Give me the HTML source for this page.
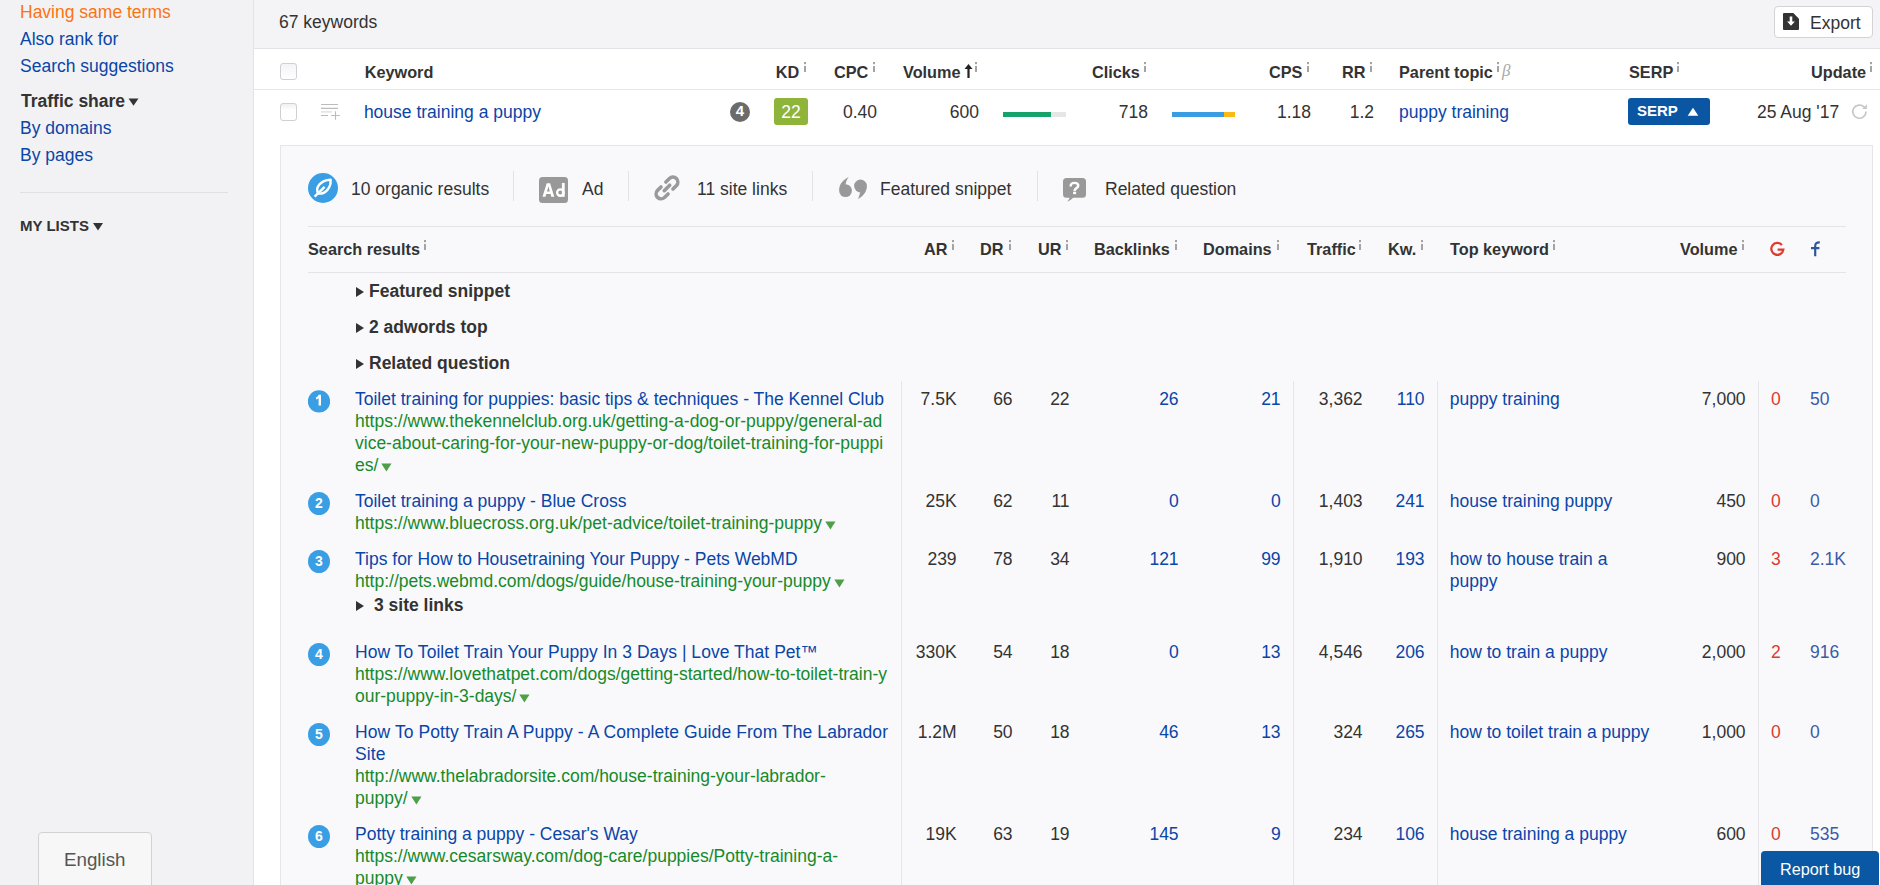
<!DOCTYPE html>
<html><head><meta charset="utf-8"><style>
html,body{margin:0;padding:0;}
body{width:1880px;height:885px;overflow:hidden;position:relative;background:#fff;font-family:"Liberation Sans",sans-serif;}
.t{position:absolute;white-space:nowrap;line-height:22px;font-family:"Liberation Sans",sans-serif;}
</style></head><body>
<div style="position:absolute;left:0px;top:0px;width:253px;height:885px;background:#f2f2f4;"></div>
<div style="position:absolute;left:253px;top:0px;width:1px;height:885px;background:#e2e2e7;"></div>
<div style="position:absolute;left:254px;top:0px;width:1626px;height:48px;background:#f4f4f6;"></div>
<div style="position:absolute;left:254px;top:48px;width:1626px;height:1px;background:#e2e2e7;"></div>
<div style="position:absolute;left:254px;top:49px;width:1626px;height:836px;background:#ffffff;"></div>
<div class="t" style="left:20px;top:1px;font-size:17.5px;color:#fb7314;">Having same terms</div>
<div class="t" style="left:20px;top:28px;font-size:17.5px;color:#0a45a8;">Also rank for</div>
<div class="t" style="left:20px;top:55px;font-size:17.5px;color:#0a45a8;">Search suggestions</div>
<div class="t" style="left:21px;top:90px;font-size:17.5px;font-weight:bold;color:#333333;">Traffic share</div>
<svg style="position:absolute;left:128px;top:98px" width="11" height="8"><path d="M0.5 0.5H10.5L5.5 7.8Z" fill="#333"/></svg>
<div class="t" style="left:20px;top:117px;font-size:17.5px;color:#0a45a8;">By domains</div>
<div class="t" style="left:20px;top:144px;font-size:17.5px;color:#0a45a8;">By pages</div>
<div style="position:absolute;left:20px;top:192px;width:208px;height:1px;background:#e0e0e5;"></div>
<div class="t" style="left:20px;top:215px;font-size:15px;font-weight:bold;color:#333333;">MY LISTS</div>
<svg style="position:absolute;left:93px;top:223px" width="11" height="8"><path d="M0 0H10L5 7.6Z" fill="#333"/></svg>
<div style="position:absolute;left:38px;top:832px;width:112px;height:60px;border:1px solid #d2d2d2;border-radius:4px;background:#f7f7f7;"></div>
<div class="t" style="left:64px;top:849px;font-size:18.75px;color:#555555;">English</div>
<div class="t" style="left:279px;top:11px;font-size:17.5px;color:#333333;">67 keywords</div>
<div style="position:absolute;left:1774px;top:6px;width:97px;height:30px;border:1px solid #d3d3d6;border-radius:4px;background:#fff;"></div>
<svg style="position:absolute;left:1783px;top:13px" width="16" height="17" viewBox="0 0 16 17"><path d="M1 0H10.3L16 5.7V16A1 1 0 0 1 15 17H1A1 1 0 0 1 0 16V1A1 1 0 0 1 1 0Z" fill="#333"/><path d="M6.7 3.6H9.3V8.6H11.9L8 12.8L4.1 8.6H6.7Z" fill="#fff"/></svg>
<div class="t" style="left:1810px;top:12px;font-size:17.5px;color:#333333;">Export</div>
<div style="position:absolute;left:254px;top:89px;width:1626px;height:1px;background:#e3e7ec;"></div>
<div style="position:absolute;left:280px;top:63px;width:15px;height:15px;border:1px solid #cfcfd4;border-radius:3px;background:linear-gradient(#f4f4f6,#fff);"></div>
<div class="t" style="left:364.7px;top:61px;font-size:16.25px;font-weight:bold;color:#333333;">Keyword</div>
<div class="t" style="left:775.8px;top:61px;font-size:16.25px;font-weight:bold;color:#333333;">KD</div>
<svg style="position:absolute;left:804px;top:62px" width="2" height="10"><rect x="0" y="0" width="2" height="2.2" fill="#a4a4a4"/><rect x="0" y="4" width="2" height="6" fill="#a4a4a4"/></svg>
<div class="t" style="left:834px;top:61px;font-size:16.25px;font-weight:bold;color:#333333;">CPC</div>
<svg style="position:absolute;left:873px;top:62px" width="2" height="10"><rect x="0" y="0" width="2" height="2.2" fill="#a4a4a4"/><rect x="0" y="4" width="2" height="6" fill="#a4a4a4"/></svg>
<div class="t" style="left:903px;top:61px;font-size:16.25px;font-weight:bold;color:#333333;">Volume</div>
<svg style="position:absolute;left:975px;top:62px" width="2" height="10"><rect x="0" y="0" width="2" height="2.2" fill="#a4a4a4"/><rect x="0" y="4" width="2" height="6" fill="#a4a4a4"/></svg>
<svg style="position:absolute;left:964px;top:64px" width="9" height="14"><path d="M4.5 0L8.5 5H5.6V14H3.4V5H0.5Z" fill="#222"/></svg>
<div class="t" style="left:1092px;top:61px;font-size:16.25px;font-weight:bold;color:#333333;">Clicks</div>
<svg style="position:absolute;left:1144px;top:62px" width="2" height="10"><rect x="0" y="0" width="2" height="2.2" fill="#a4a4a4"/><rect x="0" y="4" width="2" height="6" fill="#a4a4a4"/></svg>
<div class="t" style="left:1269px;top:61px;font-size:16.25px;font-weight:bold;color:#333333;">CPS</div>
<svg style="position:absolute;left:1307px;top:62px" width="2" height="10"><rect x="0" y="0" width="2" height="2.2" fill="#a4a4a4"/><rect x="0" y="4" width="2" height="6" fill="#a4a4a4"/></svg>
<div class="t" style="left:1342px;top:61px;font-size:16.25px;font-weight:bold;color:#333333;">RR</div>
<svg style="position:absolute;left:1370px;top:62px" width="2" height="10"><rect x="0" y="0" width="2" height="2.2" fill="#a4a4a4"/><rect x="0" y="4" width="2" height="6" fill="#a4a4a4"/></svg>
<div class="t" style="left:1399px;top:61px;font-size:16.25px;font-weight:bold;color:#333333;">Parent topic</div>
<svg style="position:absolute;left:1497px;top:62px" width="2" height="10"><rect x="0" y="0" width="2" height="2.2" fill="#a4a4a4"/><rect x="0" y="4" width="2" height="6" fill="#a4a4a4"/></svg>
<div class="t" style="left:1502px;top:60px;font-size:17px;font-style:italic;color:#a8a8a8;font-family:'Liberation Serif',serif;">&beta;</div>
<div class="t" style="left:1629px;top:61px;font-size:16.25px;font-weight:bold;color:#333333;">SERP</div>
<svg style="position:absolute;left:1677px;top:62px" width="2" height="10"><rect x="0" y="0" width="2" height="2.2" fill="#a4a4a4"/><rect x="0" y="4" width="2" height="6" fill="#a4a4a4"/></svg>
<div class="t" style="left:1811px;top:61px;font-size:16.25px;font-weight:bold;color:#333333;">Update</div>
<svg style="position:absolute;left:1870px;top:62px" width="2" height="10"><rect x="0" y="0" width="2" height="2.2" fill="#a4a4a4"/><rect x="0" y="4" width="2" height="6" fill="#a4a4a4"/></svg>
<div style="position:absolute;left:280px;top:103px;width:15px;height:16px;border:1px solid #cfcfd4;border-radius:3px;background:linear-gradient(#f0f0f3,#fff 40%);"></div>
<svg style="position:absolute;left:320px;top:103px" width="21" height="18"><g stroke="#bcbcbc" stroke-width="1.1"><path d="M1 1.5H18M1 5.4H18M1 12.5H8M11 12.5H19.8M15.5 8.3V16.8"/><path d="M1 8.9H11.8" stroke="#d6d6d6"/></g></svg>
<div class="t" style="left:363.9px;top:101px;font-size:17.5px;color:#0a45a8;">house training a puppy</div>
<div style="position:absolute;left:730px;top:102px;width:20px;height:20px;border-radius:50%;background:#6b6b6b;color:#fff;font:bold 15px/18px 'Liberation Sans';text-align:center;">4</div>
<div style="position:absolute;left:774px;top:98px;width:34px;height:27px;border-radius:3px;background:#8fb43a;color:#fff;font:17.5px/29px 'Liberation Sans';text-align:center;">22</div>
<div class="t" style="right:1003px;top:101px;font-size:17.5px;color:#333333;">0.40</div>
<div class="t" style="right:901px;top:101px;font-size:17.5px;color:#333333;">600</div>
<div style="position:absolute;left:1003px;top:112px;width:63px;height:5px;background:#e6e6e6;"></div>
<div style="position:absolute;left:1003px;top:112px;width:48px;height:5px;background:#16a26a;"></div>
<div class="t" style="right:732px;top:101px;font-size:17.5px;color:#333333;">718</div>
<div style="position:absolute;left:1172px;top:112px;width:52px;height:5px;background:#3b9de1;"></div>
<div style="position:absolute;left:1224px;top:112px;width:11px;height:5px;background:#fbb917;"></div>
<div class="t" style="right:569px;top:101px;font-size:17.5px;color:#333333;">1.18</div>
<div class="t" style="right:506px;top:101px;font-size:17.5px;color:#333333;">1.2</div>
<div class="t" style="left:1399px;top:101px;font-size:17.5px;color:#0a45a8;">puppy training</div>
<div style="position:absolute;left:1628px;top:98px;width:82px;height:27px;border-radius:3px;background:#0b56a3;"></div>
<div class="t" style="left:1637px;top:100px;font-size:15px;font-weight:bold;color:#fff;">SERP</div>
<svg style="position:absolute;left:1687px;top:107px" width="12" height="10"><path d="M6 0.8L11.3 8.8H0.7Z" fill="#fff"/></svg>
<div class="t" style="left:1757px;top:101px;font-size:17.5px;color:#333333;">25 Aug '17</div>
<svg style="position:absolute;left:1851px;top:104px" width="17" height="16" viewBox="0 0 17 16"><path d="M13.3 3.2A6.6 6.6 0 1 0 15 7.6" fill="none" stroke="#c6c6c6" stroke-width="1.7"/><path d="M15.9 0.3V4.9H11.2Z" fill="#c6c6c6"/></svg>
<div style="position:absolute;left:280px;top:145px;width:1591px;height:800px;border:1px solid #e6e6ea;background:#f9f9fb;"></div>
<svg style="position:absolute;left:308px;top:173px" width="30" height="30" viewBox="0 0 30 30"><circle cx="15" cy="15" r="15" fill="#3a9ee4"/><path d="M10.4 20.6C6.8 15.5 12 6.9 22.6 6.7C23.3 14.6 17.6 21.3 10.4 20.6Z" fill="none" stroke="#fff" stroke-width="2.4" stroke-linejoin="round"/><path d="M6.6 23.6L16.6 13.8" fill="none" stroke="#fff" stroke-width="2.4"/></svg>
<div class="t" style="left:351px;top:178px;font-size:17.5px;color:#333333;">10 organic results</div>
<div style="position:absolute;left:513px;top:171px;width:1px;height:30px;background:#e2e2e6;"></div>
<svg style="position:absolute;left:539px;top:177px" width="29" height="26" viewBox="0 0 29 26"><rect x="0" y="0" width="29" height="26" rx="3.5" fill="#999"/><path fill-rule="evenodd" d="M3.5 19.8L7.7 6.2H11.1L15.3 19.8H12.3L11.5 17H7.3L6.5 19.8ZM8 14.5H10.8L9.4 9.6Z" fill="#fff"/><rect x="22.9" y="6" width="2.8" height="13.8" fill="#fff"/><circle cx="21.3" cy="15.55" r="3.2" fill="none" stroke="#fff" stroke-width="2.3"/></svg>
<div class="t" style="left:582px;top:178px;font-size:17.5px;color:#333333;">Ad</div>
<div style="position:absolute;left:628px;top:171px;width:1px;height:30px;background:#e2e2e6;"></div>
<svg style="position:absolute;left:653px;top:174px" width="28" height="28" viewBox="1.1 1.1 25.85 25.85"><g fill="none" stroke="#9a9a9a" stroke-width="3.3" stroke-linecap="round"><path d="M11.5 16.5L16.5 11.5"/><path d="M13 8.5L16.3 5.2A4.6 4.6 0 0 1 22.8 11.7L19.5 15"/><path d="M15 19.5L11.7 22.8A4.6 4.6 0 0 1 5.2 16.3L8.5 13"/></g></svg>
<div class="t" style="left:697px;top:178px;font-size:17.5px;color:#333333;">11 site links</div>
<div style="position:absolute;left:812px;top:171px;width:1px;height:30px;background:#e2e2e6;"></div>
<svg style="position:absolute;left:838px;top:176px" width="30" height="25" viewBox="0 0 30 25"><g fill="#999"><circle cx="7.5" cy="14.6" r="6.4"/><path d="M10.8 1C5.5 3.5 1.6 7.5 1.2 13.5L7.6 8.4C8 5.5 9.2 3 10.8 1Z"/><circle cx="22.5" cy="10" r="6.4"/><path d="M19.6 23.2C25 20.5 28.4 16.5 28.8 10.5L22 16.4C21.5 19 20.8 21.5 19.6 23.2Z"/></g></svg>
<div class="t" style="left:880px;top:178px;font-size:17.5px;color:#333333;">Featured snippet</div>
<div style="position:absolute;left:1037px;top:171px;width:1px;height:30px;background:#e2e2e6;"></div>
<svg style="position:absolute;left:1062px;top:177px" width="26" height="26" viewBox="0 0 26 26"><path d="M4.5 1H20.5A3.5 3.5 0 0 1 24 4.5V17.3A3.5 3.5 0 0 1 20.5 20.8H11C9.5 22.5 7.5 24 5 24.6C6.3 23.5 7.3 22 7.6 20.8H4.5A3.5 3.5 0 0 1 1 17.3V4.5A3.5 3.5 0 0 1 4.5 1Z" fill="#999"/><path d="M8.6 9.4C8.6 6.7 10.5 5.9 12.5 5.9C14.8 5.9 16.3 7 16.3 8.7C16.3 11 12.6 11.2 12.6 13.9" fill="none" stroke="#fff" stroke-width="2.4"/><rect x="11.1" y="14.7" width="3" height="2.5" fill="#fff"/></svg>
<div class="t" style="left:1105px;top:178px;font-size:17.5px;color:#333333;">Related question</div>
<div style="position:absolute;left:308px;top:226px;width:1538px;height:1px;background:#e4e4e8;"></div>
<div class="t" style="left:308px;top:238px;font-size:16.25px;font-weight:bold;color:#333333;">Search results</div>
<svg style="position:absolute;left:424px;top:240px" width="2" height="10"><rect x="0" y="0" width="2" height="2.2" fill="#a4a4a4"/><rect x="0" y="4" width="2" height="6" fill="#a4a4a4"/></svg>
<div class="t" style="left:924px;top:238px;font-size:16.25px;font-weight:bold;color:#333333;">AR</div>
<svg style="position:absolute;left:952px;top:240px" width="2" height="10"><rect x="0" y="0" width="2" height="2.2" fill="#a4a4a4"/><rect x="0" y="4" width="2" height="6" fill="#a4a4a4"/></svg>
<div class="t" style="left:980px;top:238px;font-size:16.25px;font-weight:bold;color:#333333;">DR</div>
<svg style="position:absolute;left:1009px;top:240px" width="2" height="10"><rect x="0" y="0" width="2" height="2.2" fill="#a4a4a4"/><rect x="0" y="4" width="2" height="6" fill="#a4a4a4"/></svg>
<div class="t" style="left:1038px;top:238px;font-size:16.25px;font-weight:bold;color:#333333;">UR</div>
<svg style="position:absolute;left:1066px;top:240px" width="2" height="10"><rect x="0" y="0" width="2" height="2.2" fill="#a4a4a4"/><rect x="0" y="4" width="2" height="6" fill="#a4a4a4"/></svg>
<div class="t" style="left:1094px;top:238px;font-size:16.25px;font-weight:bold;color:#333333;">Backlinks</div>
<svg style="position:absolute;left:1175px;top:240px" width="2" height="10"><rect x="0" y="0" width="2" height="2.2" fill="#a4a4a4"/><rect x="0" y="4" width="2" height="6" fill="#a4a4a4"/></svg>
<div class="t" style="left:1203px;top:238px;font-size:16.25px;font-weight:bold;color:#333333;">Domains</div>
<svg style="position:absolute;left:1277px;top:240px" width="2" height="10"><rect x="0" y="0" width="2" height="2.2" fill="#a4a4a4"/><rect x="0" y="4" width="2" height="6" fill="#a4a4a4"/></svg>
<div class="t" style="left:1307px;top:238px;font-size:16.25px;font-weight:bold;color:#333333;">Traffic</div>
<svg style="position:absolute;left:1359px;top:240px" width="2" height="10"><rect x="0" y="0" width="2" height="2.2" fill="#a4a4a4"/><rect x="0" y="4" width="2" height="6" fill="#a4a4a4"/></svg>
<div class="t" style="left:1388px;top:238px;font-size:16.25px;font-weight:bold;color:#333333;">Kw.</div>
<svg style="position:absolute;left:1421px;top:240px" width="2" height="10"><rect x="0" y="0" width="2" height="2.2" fill="#a4a4a4"/><rect x="0" y="4" width="2" height="6" fill="#a4a4a4"/></svg>
<div class="t" style="left:1450px;top:238px;font-size:16.25px;font-weight:bold;color:#333333;">Top keyword</div>
<svg style="position:absolute;left:1553px;top:240px" width="2" height="10"><rect x="0" y="0" width="2" height="2.2" fill="#a4a4a4"/><rect x="0" y="4" width="2" height="6" fill="#a4a4a4"/></svg>
<div class="t" style="left:1680px;top:238px;font-size:16.25px;font-weight:bold;color:#333333;">Volume</div>
<svg style="position:absolute;left:1742px;top:240px" width="2" height="10"><rect x="0" y="0" width="2" height="2.2" fill="#a4a4a4"/><rect x="0" y="4" width="2" height="6" fill="#a4a4a4"/></svg>
<svg style="position:absolute;left:1769px;top:241px" width="17" height="17" viewBox="0 0 17 17"><path d="M12.9 3.9A6 6 0 1 0 14.3 8.6H8.6" fill="none" stroke="#dd3b2f" stroke-width="2.3"/></svg>
<svg style="position:absolute;left:1810px;top:240px" width="12" height="17" viewBox="0 0 12 17"><path d="M5.2 16.2V6.2C5.2 3.2 6.8 2.2 9.8 2.3M1 8.2H9.4" fill="none" stroke="#2f559a" stroke-width="2.2"/></svg>
<div style="position:absolute;left:308px;top:272px;width:1538px;height:1px;background:#e4e4e8;"></div>
<svg style="position:absolute;left:356px;top:287px" width="8" height="10"><path d="M0 0L8 5.0L0 10Z" fill="#333"/></svg>
<div class="t" style="left:369px;top:280px;font-size:17.5px;font-weight:bold;color:#333333;">Featured snippet</div>
<svg style="position:absolute;left:356px;top:323px" width="8" height="10"><path d="M0 0L8 5.0L0 10Z" fill="#333"/></svg>
<div class="t" style="left:369px;top:316px;font-size:17.5px;font-weight:bold;color:#333333;">2 adwords top</div>
<svg style="position:absolute;left:356px;top:359px" width="8" height="10"><path d="M0 0L8 5.0L0 10Z" fill="#333"/></svg>
<div class="t" style="left:369px;top:352px;font-size:17.5px;font-weight:bold;color:#333333;">Related question</div>
<div style="position:absolute;left:901px;top:381px;width:1px;height:504px;background:#e6e6ea;"></div>
<div style="position:absolute;left:1293px;top:381px;width:1px;height:504px;background:#e6e6ea;"></div>
<div style="position:absolute;left:1437px;top:381px;width:1px;height:504px;background:#e6e6ea;"></div>
<div style="position:absolute;left:1758px;top:381px;width:1px;height:504px;background:#e6e6ea;"></div>
<svg style="position:absolute;left:308px;top:390px" width="22" height="23" viewBox="0 0 22 23"><circle cx="11" cy="11.4" r="11.2" fill="#3a9ee4"/><path d="M10.6 4.8H13V15.6H10.6V8.2C9.8 8.9 8.9 9.3 8 9.6V7.4C9 7 10 6.2 10.6 4.8Z" fill="#fff"/></svg>
<div class="t" style="left:355px;top:388px;font-size:17.5px;color:#0a45a8;">Toilet training for puppies: basic tips &amp; techniques - The Kennel Club</div>
<div class="t" style="left:355px;top:410px;font-size:17.5px;color:#158a2a;">https://www.thekennelclub.org.uk/getting-a-dog-or-puppy/general-ad</div>
<div class="t" style="left:355px;top:432px;font-size:17.5px;color:#158a2a;">vice-about-caring-for-your-new-puppy-or-dog/toilet-training-for-puppi</div>
<div class="t" style="left:355px;top:454px;font-size:17.5px;color:#158a2a;">es/<span style="display:inline-block;width:3px"></span><svg width="11" height="9" style="vertical-align:-1px"><path d="M0.3 0.5H10.5L5.4 8.5Z" fill="#4f9e48"/></svg></div>
<div class="t" style="right:923.4px;top:388px;font-size:17.5px;color:#333333;">7.5K</div>
<div class="t" style="right:867.4px;top:388px;font-size:17.5px;color:#333333;">66</div>
<div class="t" style="right:810.4000000000001px;top:388px;font-size:17.5px;color:#333333;">22</div>
<div class="t" style="right:701.4000000000001px;top:388px;font-size:17.5px;color:#0a45a8;">26</div>
<div class="t" style="right:599.4000000000001px;top:388px;font-size:17.5px;color:#0a45a8;">21</div>
<div class="t" style="right:517.4000000000001px;top:388px;font-size:17.5px;color:#333333;">3,362</div>
<div class="t" style="right:455.4000000000001px;top:388px;font-size:17.5px;color:#0a45a8;">110</div>
<div class="t" style="left:1449.8px;top:388px;font-size:17.5px;color:#0a45a8;">puppy training</div>
<div class="t" style="right:134.4000000000001px;top:388px;font-size:17.5px;color:#333333;">7,000</div>
<div class="t" style="left:1771px;top:388px;font-size:17.5px;color:#dc3b2f;">0</div>
<div class="t" style="left:1810px;top:388px;font-size:17.5px;color:#3b5ba8;">50</div>
<div style="position:absolute;left:308px;top:492px;width:22px;height:23px;border-radius:50%;background:#3a9ee4;color:#fff;font:bold 14px/22px 'Liberation Sans';text-align:center;">2</div>
<div class="t" style="left:355px;top:490px;font-size:17.5px;color:#0a45a8;">Toilet training a puppy - Blue Cross</div>
<div class="t" style="left:355px;top:512px;font-size:17.5px;color:#158a2a;">https://www.bluecross.org.uk/pet-advice/toilet-training-puppy<span style="display:inline-block;width:3px"></span><svg width="11" height="9" style="vertical-align:-1px"><path d="M0.3 0.5H10.5L5.4 8.5Z" fill="#4f9e48"/></svg></div>
<div class="t" style="right:923.4px;top:490px;font-size:17.5px;color:#333333;">25K</div>
<div class="t" style="right:867.4px;top:490px;font-size:17.5px;color:#333333;">62</div>
<div class="t" style="right:810.4000000000001px;top:490px;font-size:17.5px;color:#333333;">11</div>
<div class="t" style="right:701.4000000000001px;top:490px;font-size:17.5px;color:#0a45a8;">0</div>
<div class="t" style="right:599.4000000000001px;top:490px;font-size:17.5px;color:#0a45a8;">0</div>
<div class="t" style="right:517.4000000000001px;top:490px;font-size:17.5px;color:#333333;">1,403</div>
<div class="t" style="right:455.4000000000001px;top:490px;font-size:17.5px;color:#0a45a8;">241</div>
<div class="t" style="left:1449.8px;top:490px;font-size:17.5px;color:#0a45a8;">house training puppy</div>
<div class="t" style="right:134.4000000000001px;top:490px;font-size:17.5px;color:#333333;">450</div>
<div class="t" style="left:1771px;top:490px;font-size:17.5px;color:#dc3b2f;">0</div>
<div class="t" style="left:1810px;top:490px;font-size:17.5px;color:#3b5ba8;">0</div>
<div style="position:absolute;left:308px;top:550px;width:22px;height:23px;border-radius:50%;background:#3a9ee4;color:#fff;font:bold 14px/22px 'Liberation Sans';text-align:center;">3</div>
<div class="t" style="left:355px;top:548px;font-size:17.5px;color:#0a45a8;">Tips for How to Housetraining Your Puppy - Pets WebMD</div>
<div class="t" style="left:355px;top:570px;font-size:17.5px;color:#158a2a;">http://pets.webmd.com/dogs/guide/house-training-your-puppy<span style="display:inline-block;width:3px"></span><svg width="11" height="9" style="vertical-align:-1px"><path d="M0.3 0.5H10.5L5.4 8.5Z" fill="#4f9e48"/></svg></div>
<div class="t" style="right:923.4px;top:548px;font-size:17.5px;color:#333333;">239</div>
<div class="t" style="right:867.4px;top:548px;font-size:17.5px;color:#333333;">78</div>
<div class="t" style="right:810.4000000000001px;top:548px;font-size:17.5px;color:#333333;">34</div>
<div class="t" style="right:701.4000000000001px;top:548px;font-size:17.5px;color:#0a45a8;">121</div>
<div class="t" style="right:599.4000000000001px;top:548px;font-size:17.5px;color:#0a45a8;">99</div>
<div class="t" style="right:517.4000000000001px;top:548px;font-size:17.5px;color:#333333;">1,910</div>
<div class="t" style="right:455.4000000000001px;top:548px;font-size:17.5px;color:#0a45a8;">193</div>
<div class="t" style="left:1449.8px;top:548px;font-size:17.5px;color:#0a45a8;">how to house train a</div>
<div class="t" style="left:1449.8px;top:570px;font-size:17.5px;color:#0a45a8;">puppy</div>
<div class="t" style="right:134.4000000000001px;top:548px;font-size:17.5px;color:#333333;">900</div>
<div class="t" style="left:1771px;top:548px;font-size:17.5px;color:#dc3b2f;">3</div>
<div class="t" style="left:1810px;top:548px;font-size:17.5px;color:#3b5ba8;">2.1K</div>
<div style="position:absolute;left:308px;top:643px;width:22px;height:23px;border-radius:50%;background:#3a9ee4;color:#fff;font:bold 14px/22px 'Liberation Sans';text-align:center;">4</div>
<div class="t" style="left:355px;top:641px;font-size:17.5px;color:#0a45a8;letter-spacing:0.04px;">How To Toilet Train Your Puppy In 3 Days | Love That Pet&trade;</div>
<div class="t" style="left:355px;top:663px;font-size:17.5px;color:#158a2a;">https://www.lovethatpet.com/dogs/getting-started/how-to-toilet-train-y</div>
<div class="t" style="left:355px;top:685px;font-size:17.5px;color:#158a2a;">our-puppy-in-3-days/<span style="display:inline-block;width:3px"></span><svg width="11" height="9" style="vertical-align:-1px"><path d="M0.3 0.5H10.5L5.4 8.5Z" fill="#4f9e48"/></svg></div>
<div class="t" style="right:923.4px;top:641px;font-size:17.5px;color:#333333;">330K</div>
<div class="t" style="right:867.4px;top:641px;font-size:17.5px;color:#333333;">54</div>
<div class="t" style="right:810.4000000000001px;top:641px;font-size:17.5px;color:#333333;">18</div>
<div class="t" style="right:701.4000000000001px;top:641px;font-size:17.5px;color:#0a45a8;">0</div>
<div class="t" style="right:599.4000000000001px;top:641px;font-size:17.5px;color:#0a45a8;">13</div>
<div class="t" style="right:517.4000000000001px;top:641px;font-size:17.5px;color:#333333;">4,546</div>
<div class="t" style="right:455.4000000000001px;top:641px;font-size:17.5px;color:#0a45a8;">206</div>
<div class="t" style="left:1449.8px;top:641px;font-size:17.5px;color:#0a45a8;">how to train a puppy</div>
<div class="t" style="right:134.4000000000001px;top:641px;font-size:17.5px;color:#333333;">2,000</div>
<div class="t" style="left:1771px;top:641px;font-size:17.5px;color:#dc3b2f;">2</div>
<div class="t" style="left:1810px;top:641px;font-size:17.5px;color:#3b5ba8;">916</div>
<div style="position:absolute;left:308px;top:723px;width:22px;height:23px;border-radius:50%;background:#3a9ee4;color:#fff;font:bold 14px/22px 'Liberation Sans';text-align:center;">5</div>
<div class="t" style="left:355px;top:721px;font-size:17.5px;color:#0a45a8;letter-spacing:0.088px;">How To Potty Train A Puppy - A Complete Guide From The Labrador</div>
<div class="t" style="left:355px;top:743px;font-size:17.5px;color:#0a45a8;letter-spacing:0.088px;">Site</div>
<div class="t" style="left:355px;top:765px;font-size:17.5px;color:#158a2a;">http://www.thelabradorsite.com/house-training-your-labrador-</div>
<div class="t" style="left:355px;top:787px;font-size:17.5px;color:#158a2a;">puppy/<span style="display:inline-block;width:3px"></span><svg width="11" height="9" style="vertical-align:-1px"><path d="M0.3 0.5H10.5L5.4 8.5Z" fill="#4f9e48"/></svg></div>
<div class="t" style="right:923.4px;top:721px;font-size:17.5px;color:#333333;">1.2M</div>
<div class="t" style="right:867.4px;top:721px;font-size:17.5px;color:#333333;">50</div>
<div class="t" style="right:810.4000000000001px;top:721px;font-size:17.5px;color:#333333;">18</div>
<div class="t" style="right:701.4000000000001px;top:721px;font-size:17.5px;color:#0a45a8;">46</div>
<div class="t" style="right:599.4000000000001px;top:721px;font-size:17.5px;color:#0a45a8;">13</div>
<div class="t" style="right:517.4000000000001px;top:721px;font-size:17.5px;color:#333333;">324</div>
<div class="t" style="right:455.4000000000001px;top:721px;font-size:17.5px;color:#0a45a8;">265</div>
<div class="t" style="left:1449.8px;top:721px;font-size:17.5px;color:#0a45a8;">how to toilet train a puppy</div>
<div class="t" style="right:134.4000000000001px;top:721px;font-size:17.5px;color:#333333;">1,000</div>
<div class="t" style="left:1771px;top:721px;font-size:17.5px;color:#dc3b2f;">0</div>
<div class="t" style="left:1810px;top:721px;font-size:17.5px;color:#3b5ba8;">0</div>
<div style="position:absolute;left:308px;top:825px;width:22px;height:23px;border-radius:50%;background:#3a9ee4;color:#fff;font:bold 14px/22px 'Liberation Sans';text-align:center;">6</div>
<div class="t" style="left:355px;top:823px;font-size:17.5px;color:#0a45a8;">Potty training a puppy - Cesar's Way</div>
<div class="t" style="left:355px;top:845px;font-size:17.5px;color:#158a2a;">https://www.cesarsway.com/dog-care/puppies/Potty-training-a-</div>
<div class="t" style="left:355px;top:867px;font-size:17.5px;color:#158a2a;">puppy<span style="display:inline-block;width:3px"></span><svg width="11" height="9" style="vertical-align:-1px"><path d="M0.3 0.5H10.5L5.4 8.5Z" fill="#4f9e48"/></svg></div>
<div class="t" style="right:923.4px;top:823px;font-size:17.5px;color:#333333;">19K</div>
<div class="t" style="right:867.4px;top:823px;font-size:17.5px;color:#333333;">63</div>
<div class="t" style="right:810.4000000000001px;top:823px;font-size:17.5px;color:#333333;">19</div>
<div class="t" style="right:701.4000000000001px;top:823px;font-size:17.5px;color:#0a45a8;">145</div>
<div class="t" style="right:599.4000000000001px;top:823px;font-size:17.5px;color:#0a45a8;">9</div>
<div class="t" style="right:517.4000000000001px;top:823px;font-size:17.5px;color:#333333;">234</div>
<div class="t" style="right:455.4000000000001px;top:823px;font-size:17.5px;color:#0a45a8;">106</div>
<div class="t" style="left:1449.8px;top:823px;font-size:17.5px;color:#0a45a8;">house training a puppy</div>
<div class="t" style="right:134.4000000000001px;top:823px;font-size:17.5px;color:#333333;">600</div>
<div class="t" style="left:1771px;top:823px;font-size:17.5px;color:#dc3b2f;">0</div>
<div class="t" style="left:1810px;top:823px;font-size:17.5px;color:#3b5ba8;">535</div>
<svg style="position:absolute;left:356px;top:601px" width="8" height="10"><path d="M0 0L8 5.0L0 10Z" fill="#333"/></svg>
<div class="t" style="left:374px;top:594px;font-size:17.5px;font-weight:bold;color:#333333;">3 site links</div>
<div style="position:absolute;left:1761px;top:851px;width:118px;height:40px;border-radius:4px 4px 0 0;background:#0a58a3;"></div>
<div class="t" style="left:1780px;top:858px;font-size:16.25px;color:#fff;">Report bug</div>
</body></html>
